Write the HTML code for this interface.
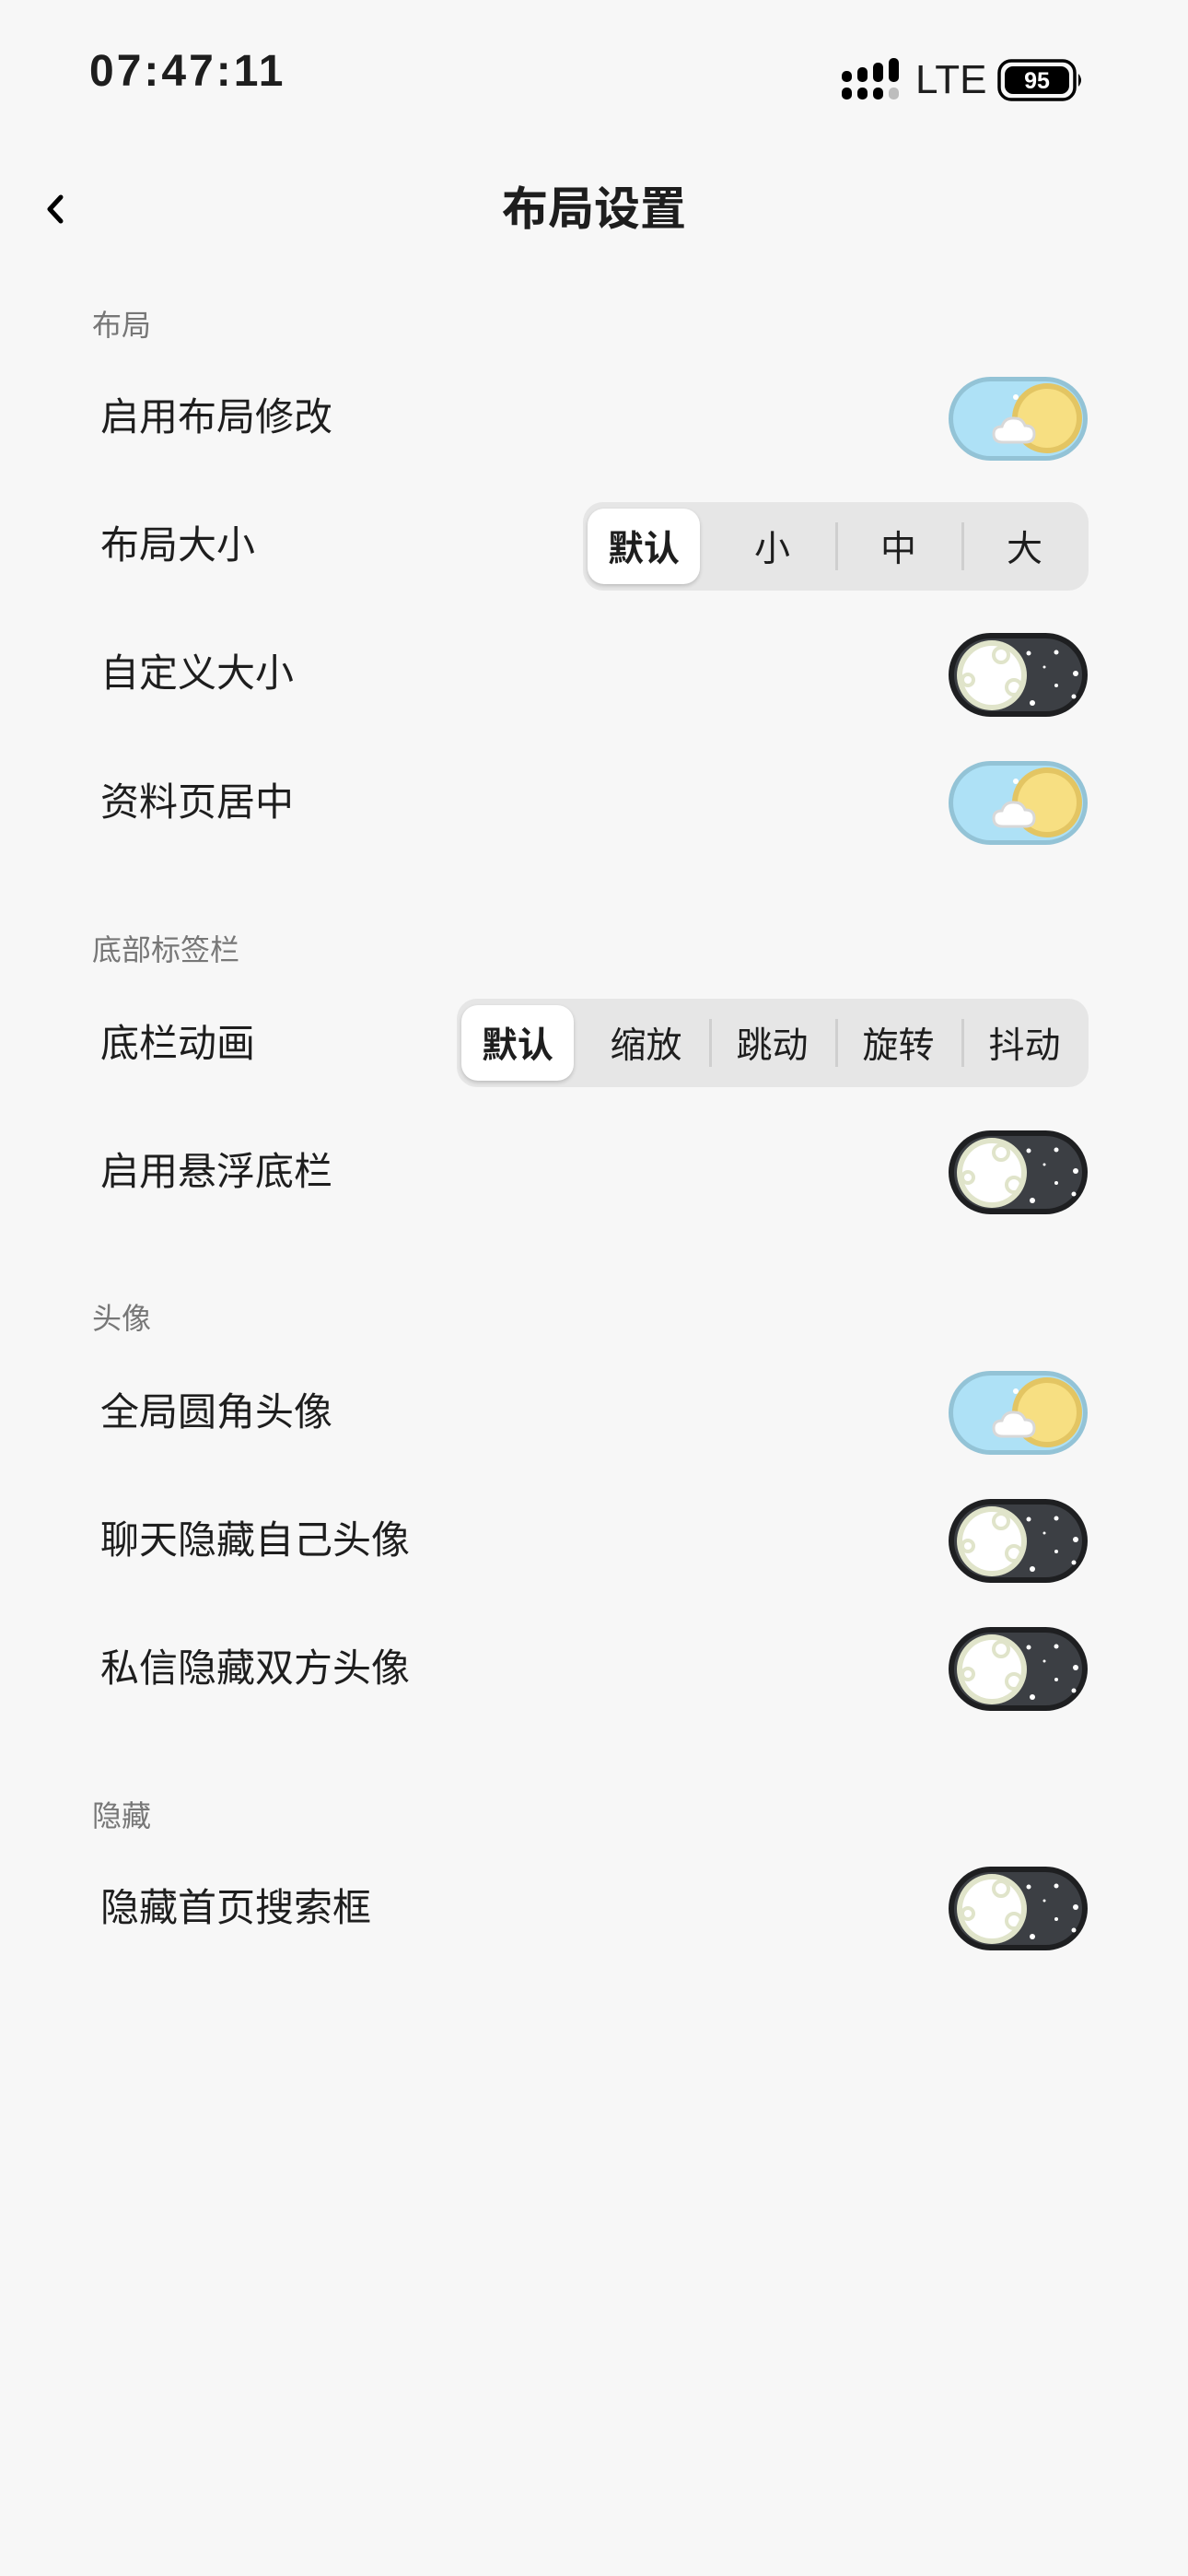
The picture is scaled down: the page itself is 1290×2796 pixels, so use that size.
<!DOCTYPE html>
<html><head><meta charset="utf-8"><style>
*{margin:0;padding:0;box-sizing:border-box}
body{width:1290px;height:2796px;background:#f7f7f7;position:relative;overflow:hidden;font-family:"Liberation Sans","Noto Sans CJK SC",sans-serif;color:#1e1e1e}
.a{position:absolute}
.sec{position:absolute;left:100px;font-size:32px;color:#777;line-height:40px}
.row{position:absolute;left:109px;font-size:42px;line-height:50px;color:#1e1e1e}
.tg{position:absolute;left:1029px;width:153px;height:93px}
.seg{position:absolute;height:96px;background:#e6e6e6;border-radius:22px;display:flex}
.seg div{width:137px;height:96px;display:flex;align-items:center;justify-content:center;font-size:39px;position:relative}
.seg div.sel{background:#fff;border-radius:18px;margin:7px 0 7px 5px;height:82px;width:122px;margin-right:10px;box-shadow:0 2px 4px rgba(0,0,0,.18);font-weight:bold}
.seg div.sp::before{content:"";position:absolute;left:0;top:22px;height:52px;width:3px;background:#cfcfcf}
</style></head><body>
<svg width="0" height="0" style="position:absolute"><defs>
<symbol id="sun" viewBox="0 0 153 93">
<rect x="1" y="1" width="151" height="91" rx="45.5" fill="#93c3d6"/>
<rect x="6" y="6" width="141" height="81" rx="40.5" fill="#aee1f6"/>
<circle cx="108" cy="46" r="38" fill="#e3c563"/>
<circle cx="108" cy="46" r="32" fill="#f7df82"/>
<circle cx="74" cy="23" r="3" fill="#fff"/>
<path d="M60 72 Q50 72 50 63 Q50 55 59 55 Q62 45 73 46 Q81 46 84 54 Q94 54 94 63 Q94 72 84 72 Z" fill="#fff" stroke="#d8d8d8" stroke-width="3"/>
</symbol>
<symbol id="moon" viewBox="0 0 153 93">
<rect x="1" y="1" width="151" height="91" rx="45.5" fill="#1e1f21"/>
<rect x="7" y="7" width="139" height="79" rx="39.5" fill="#3c3f44"/>
<circle cx="48" cy="47" r="38" fill="#e0e4ca"/>
<circle cx="48" cy="47" r="32" fill="#fff"/>
<circle cx="58" cy="25" r="8" fill="none" stroke="#e0e4ca" stroke-width="4"/>
<circle cx="72" cy="60" r="8" fill="none" stroke="#e0e4ca" stroke-width="4"/>
<circle cx="22" cy="52" r="6" fill="none" stroke="#e0e4ca" stroke-width="4"/>
<circle cx="88" cy="23" r="2.5" fill="#fff"/><circle cx="118" cy="22" r="2.5" fill="#fff"/>
<circle cx="105" cy="38" r="1.5" fill="#fff"/><circle cx="139" cy="45" r="3" fill="#fff"/>
<circle cx="118" cy="58" r="2" fill="#fff"/><circle cx="137" cy="70" r="2.5" fill="#fff"/>
<circle cx="92" cy="77" r="3" fill="#fff"/>
</symbol></defs></svg>

<div class="a" style="left:97px;top:50px;font-size:48px;font-weight:bold;letter-spacing:3px">07:47:11</div>
<svg class="a" style="left:914px;top:63px" width="70" height="48" viewBox="0 0 70 48">
<rect x="0" y="14" width="11" height="12" rx="5" fill="#000"/><rect x="0" y="32" width="11" height="13" rx="5" fill="#000"/>
<rect x="17" y="10" width="11" height="16" rx="5" fill="#000"/><rect x="17" y="32" width="11" height="13" rx="5" fill="#000"/>
<rect x="34" y="5" width="11" height="21" rx="5" fill="#000"/><rect x="34" y="32" width="11" height="13" rx="5" fill="#000"/>
<rect x="51" y="0" width="11" height="26" rx="5" fill="#000"/><rect x="51" y="32" width="11" height="13" rx="5" fill="#bdbdbd"/>
</svg>
<div class="a" style="left:994px;top:62px;font-size:44px;line-height:50px">LTE</div>
<svg class="a" style="left:1083px;top:64px" width="96" height="46" viewBox="0 0 96 46">
<rect x="2" y="2" width="82" height="42" rx="13" fill="none" stroke="#000" stroke-width="3.5"/>
<rect x="8" y="8" width="70" height="30" rx="9" fill="#000"/>
<text x="43" y="32" text-anchor="middle" fill="#fff" font-family="Liberation Sans" font-weight="bold" font-size="25">95</text>
<path d="M88 16 Q94 23 88 30 Z" fill="#000"/>
</svg>

<svg class="a" style="left:48px;top:210px" width="24" height="34" viewBox="0 0 24 34"><path d="M18 4 L6 17 L18 30" fill="none" stroke="#000" stroke-width="5" stroke-linecap="round" stroke-linejoin="round"/></svg>
<div class="a" style="left:0;width:1290px;text-align:center;top:196px;font-size:50px;font-weight:bold;line-height:62px">布局设置</div>

<div class="sec" style="top:333px">布局</div>
<div class="row" style="top:428px">启用布局修改</div>
<svg class="tg" style="top:408px"><use href="#sun"/></svg>
<div class="row" style="top:567px">布局大小</div>
<div class="seg" style="left:633px;top:545px;width:549px"><div class="sel">默认</div><div>小</div><div class="sp">中</div><div class="sp">大</div></div>
<div class="row" style="top:706px">自定义大小</div>
<svg class="tg" style="top:686px"><use href="#moon"/></svg>
<div class="row" style="top:846px">资料页居中</div>
<svg class="tg" style="top:825px"><use href="#sun"/></svg>

<div class="sec" style="top:1011px">底部标签栏</div>
<div class="row" style="top:1108px">底栏动画</div>
<div class="seg" style="left:496px;top:1084px;width:686px"><div class="sel">默认</div><div>缩放</div><div class="sp">跳动</div><div class="sp">旋转</div><div class="sp">抖动</div></div>
<div class="row" style="top:1247px">启用悬浮底栏</div>
<svg class="tg" style="top:1226px"><use href="#moon"/></svg>

<div class="sec" style="top:1411px">头像</div>
<div class="row" style="top:1508px">全局圆角头像</div>
<svg class="tg" style="top:1487px"><use href="#sun"/></svg>
<div class="row" style="top:1647px">聊天隐藏自己头像</div>
<svg class="tg" style="top:1626px"><use href="#moon"/></svg>
<div class="row" style="top:1786px">私信隐藏双方头像</div>
<svg class="tg" style="top:1765px"><use href="#moon"/></svg>

<div class="sec" style="top:1951px">隐藏</div>
<div class="row" style="top:2046px">隐藏首页搜索框</div>
<svg class="tg" style="top:2025px"><use href="#moon"/></svg>
</body></html>
